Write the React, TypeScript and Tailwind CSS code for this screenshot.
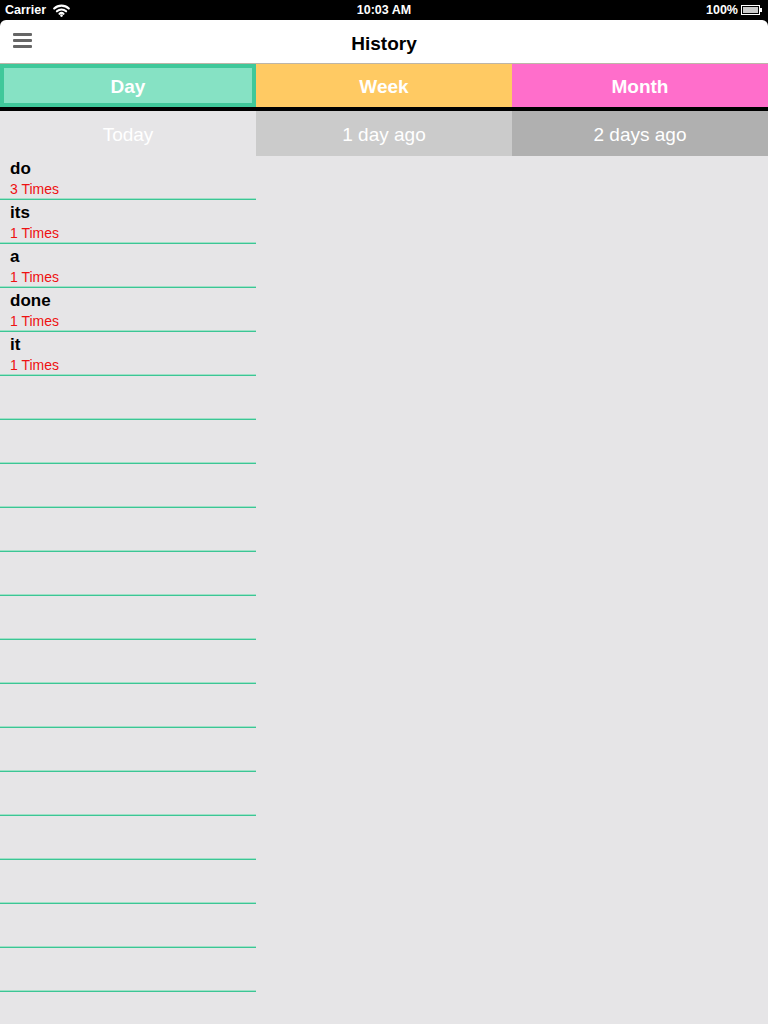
import React from "react";

const words = [
  { w: "do", n: 3 },
  { w: "its", n: 1 },
  { w: "a", n: 1 },
  { w: "done", n: 1 },
  { w: "it", n: 1 },
];

function Wifi() {
  return (
    <svg width="17" height="13" viewBox="0 0 17 13" className="ml-[7px]">
      <path d="M1.2 4.6 A10.5 10.5 0 0 1 15.8 4.6" stroke="white" strokeWidth="2.1" fill="none" strokeLinecap="round" />
      <path d="M3.9 7.3 A6.6 6.6 0 0 1 13.1 7.3" stroke="white" strokeWidth="2.1" fill="none" strokeLinecap="round" />
      <path d="M6.5 9.8 A2.9 2.9 0 0 1 10.5 9.8" stroke="white" strokeWidth="2.1" fill="none" strokeLinecap="round" />
      <circle cx="8.5" cy="11.6" r="1.3" fill="white" />
    </svg>
  );
}

function Battery() {
  return (
    <svg width="22" height="10" viewBox="0 0 22 10" className="ml-[3px]">
      <rect x="0.5" y="0.5" width="18" height="9" fill="none" stroke="white" strokeWidth="1" />
      <rect x="2" y="2" width="15" height="6" fill="#c8c8c8" />
      <rect x="19" y="3" width="2" height="4" fill="white" />
    </svg>
  );
}

export default function App() {
  const rows = Array.from({ length: 19 }, (_, i) => words[i]);
  return (
    <div
      className="w-[768px] h-[1024px] bg-black flex flex-col overflow-hidden"
      style={{ fontFamily: '"Liberation Sans", Arial, sans-serif' }}
    >
      {/* status bar */}
      <div className="h-[20px] grid grid-cols-3 items-center px-[5px] text-white text-[12.5px] font-bold">
        <div className="flex items-center">
          <span>Carrier</span>
          <Wifi />
        </div>
        <div className="text-center">10:03 AM</div>
        <div className="flex items-center justify-end">
          <span>100%</span>
          <Battery />
        </div>
      </div>

      {/* nav bar */}
      <div className="h-[44px] bg-white rounded-t-[6px] border-b border-[#bdb5a8] grid grid-cols-[1fr_auto_1fr]">
        <div className="flex flex-col gap-[3px] pl-[13px] pt-[13px]">
          <div className="w-[19px] h-[3px] bg-[#666666] rounded-[1px]" />
          <div className="w-[19px] h-[3px] bg-[#666666] rounded-[1px]" />
          <div className="w-[19px] h-[3px] bg-[#666666] rounded-[1px]" />
        </div>
        <div className="flex items-center pt-[5px] text-[19px] font-bold text-black">History</div>
        <div />
      </div>

      {/* tabs */}
      <div className="h-[43px] grid grid-cols-3 text-white text-[19px] font-bold">
        <div className="bg-[#86e2c4] border-[4px] border-[#3fc89a] flex items-center justify-center pt-[3px]">Day</div>
        <div className="bg-[#ffca63] flex items-center justify-center pt-[3px]">Week</div>
        <div className="bg-[#ff6ecb] flex items-center justify-center pt-[3px]">Month</div>
      </div>
      <div className="h-[4px] bg-black" />

      <div className="flex-1 bg-[#e6e5e7] flex flex-col">
        {/* segment row */}
        <div className="h-[45px] grid grid-cols-3 text-white text-[19px]">
          <div className="bg-[#e6e5e7] flex items-center justify-center pt-[3px]">Today</div>
          <div className="bg-[#cbcbcb] flex items-center justify-center pt-[3px]">1 day ago</div>
          <div className="bg-[#b0b0b0] flex items-center justify-center pt-[3px]">2 days ago</div>
        </div>

        {/* list */}
        <div className="w-[256px] flex flex-col">
          {rows.map((r, i) => (
            <div key={i} className="h-[44px] flex flex-col">
              <div className="flex-1 pl-[10px] pt-[3px] flex flex-col">
                {r && (
                  <>
                    <div className="text-[17px] leading-[20px] font-bold text-black">{r.w}</div>
                    <div className="text-[14px] leading-[17px] mt-[2px] text-[#ee1111]">{r.n} Times</div>
                  </>
                )}
              </div>
              <div className="h-[1px] bg-[#9fe0c6]" />
              <div className="h-[1px] bg-[#3cc595]" />
            </div>
          ))}
        </div>
      </div>
    </div>
  );
}
